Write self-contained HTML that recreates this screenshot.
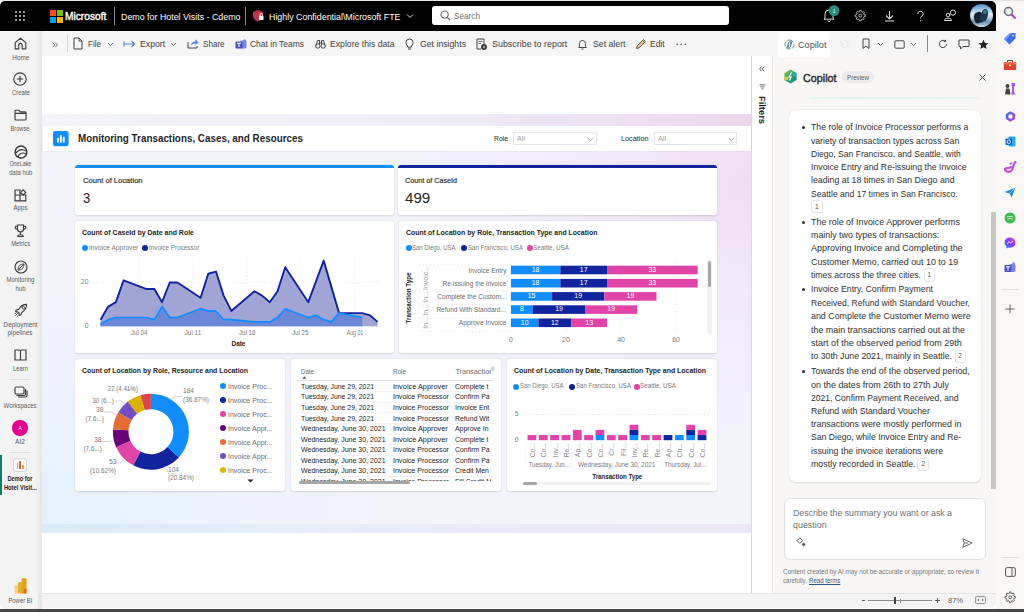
<!DOCTYPE html>
<html><head><meta charset="utf-8">
<style>
*{box-sizing:border-box}
html,body{margin:0;padding:0}
body{width:1024px;height:612px;overflow:hidden;position:relative;background:#fff;font-family:"Liberation Sans",sans-serif;color:#242424}
.a{position:absolute}
.t{position:absolute;white-space:nowrap;line-height:1}
svg{position:absolute;overflow:visible}
</style></head><body>
<div class="a" style="left:0.00px;top:0.00px;width:1024.00px;height:1.00px;background:#e6e6e6;"></div>
<div class="a" style="left:996.00px;top:1.00px;width:28.00px;height:608.00px;background:#f9f8f7;"></div>
<div class="a" style="left:0.00px;top:1.00px;width:996.00px;height:30.00px;background:#000;border-radius:5px 5px 0 0"></div>
<div class="a" style="left:0.00px;top:31.00px;width:42.00px;height:578.00px;background:#f3f3f3;border-radius:0 0 0 5px"></div>
<div class="a" style="left:35.00px;top:31.00px;width:7.00px;height:562.00px;background:linear-gradient(90deg,rgba(243,243,243,1),#ececec 55%,#e4e4e4);"></div>
<div class="a" style="left:42.00px;top:31.00px;width:954.00px;height:25.00px;background:#f5f5f5;"></div>
<div class="a" style="left:42.00px;top:56.00px;width:709.00px;height:537.00px;background:#fff;"></div>
<div class="a" style="left:751.00px;top:56.00px;width:1.00px;height:537.00px;background:#d9d9d9;"></div>
<div class="a" style="left:752.00px;top:56.00px;width:20.00px;height:537.00px;background:#fff;"></div>
<div class="a" style="left:772.00px;top:56.00px;width:224.00px;height:537.00px;background:#f8f7f6;"></div>
<div class="a" style="left:772.00px;top:56.00px;width:1.00px;height:537.00px;background:#ededed;"></div>
<div class="a" style="left:42.00px;top:593.00px;width:954.00px;height:15.00px;background:#f4f4f4;border-top:1px solid #e3e3e3;border-radius:0 0 6px 0"></div>
<div class="a" style="left:38.00px;top:593.00px;width:4.00px;height:16.00px;background:#e6e6e6;"></div>
<div class="a" style="left:0.00px;top:609.00px;width:1024.00px;height:3.00px;background:#474747;"></div>
<svg style="left:0.00px;top:0.00px;" width="40" height="31" viewBox="0 0 40 31"><circle cx="16" cy="12" r="0.9" fill="#e8e8e8"/><circle cx="16" cy="16" r="0.9" fill="#e8e8e8"/><circle cx="16" cy="20" r="0.9" fill="#e8e8e8"/><circle cx="20" cy="12" r="0.9" fill="#e8e8e8"/><circle cx="20" cy="16" r="0.9" fill="#e8e8e8"/><circle cx="20" cy="20" r="0.9" fill="#e8e8e8"/><circle cx="24" cy="12" r="0.9" fill="#e8e8e8"/><circle cx="24" cy="16" r="0.9" fill="#e8e8e8"/><circle cx="24" cy="20" r="0.9" fill="#e8e8e8"/></svg>
<div class="a" style="left:50.00px;top:9.90px;width:6.20px;height:6.20px;background:#f25022;"></div>
<div class="a" style="left:56.80px;top:9.90px;width:6.20px;height:6.20px;background:#7fba00;"></div>
<div class="a" style="left:50.00px;top:16.70px;width:6.20px;height:6.20px;background:#00a4ef;"></div>
<div class="a" style="left:56.80px;top:16.70px;width:6.20px;height:6.20px;background:#ffb900;"></div>
<div class="t" style="left:65.00px;top:11.50px;font-size:10.40px;color:#fff;font-weight:400;-webkit-text-stroke:0.4px #fff;transform:scaleX(0.9821);transform-origin:0 0;">Microsoft</div>
<div class="a" style="left:114.00px;top:6.50px;width:1.00px;height:18.50px;background:#8a8a8a;"></div>
<div class="t" style="left:120.50px;top:11.97px;font-size:9.60px;color:#fff;font-weight:400;transform:scaleX(0.9236);transform-origin:0 0;">Demo for Hotel Visits - Cdemo</div>
<div class="a" style="left:245.00px;top:6.50px;width:1.00px;height:18.50px;background:#8a8a8a;"></div>
<svg style="left:252.00px;top:9.00px;" width="13" height="13" viewBox="0 0 13 13"><path d="M6 1 L11 3 V7 C11 10 8.5 11.5 6 12.5 C3.5 11.5 1 10 1 7 V3 Z" fill="#c4314b"/><rect x="7" y="7" width="4.5" height="4" rx="0.6" fill="#fff"/><path d="M8 7 V5.8 A1.3 1.3 0 0 1 10.6 5.8 V7" stroke="#fff" stroke-width="0.9" fill="none"/></svg>
<div class="t" style="left:268.80px;top:11.97px;font-size:9.60px;color:#fff;font-weight:400;transform:scaleX(0.9237);transform-origin:0 0;">Highly Confidential\Microsoft FTE</div>
<svg style="left:406.00px;top:13.00px;" width="8" height="6" viewBox="0 0 8 6"><path d="M1 1.5 L4 4.5 L7 1.5" stroke="#ddd" stroke-width="1" fill="none"/></svg>
<div class="a" style="left:431.80px;top:6.30px;width:297.00px;height:19.20px;background:#fff;border-radius:3px"></div>
<svg style="left:440.00px;top:10.00px;" width="11" height="11" viewBox="0 0 11 11"><circle cx="4.6" cy="4.6" r="3.6" stroke="#616161" stroke-width="1.1" fill="none"/><path d="M7.3 7.3 L10 10" stroke="#616161" stroke-width="1.1"/></svg>
<div class="t" style="left:453.80px;top:11.17px;font-size:9.60px;color:#6b6b6b;font-weight:400;transform:scaleX(0.8551);transform-origin:0 0;">Search</div>
<svg style="left:822.00px;top:8.00px;" width="14" height="14" viewBox="0 0 14 14"><path d="M3 10 V6 A4 4 0 0 1 11 6 V10 L12 11.2 H2 Z" stroke="#ddd" stroke-width="1" fill="none"/><path d="M5.5 12.5 A1.6 1.6 0 0 0 8.5 12.5" stroke="#ddd" stroke-width="1" fill="none"/></svg>
<svg style="left:828.00px;top:5.00px;" width="12" height="12" viewBox="0 0 12 12"><circle cx="6" cy="5.6" r="5.4" fill="#2a8c80"/><text x="6" y="7.8" font-size="5.5" fill="#e8f5f3" text-anchor="middle" font-family="Liberation Sans">1</text></svg>
<svg style="left:852.50px;top:8.40px;transform:scale(0.82);transform-origin:7.25px 7.6px;" width="15" height="15" viewBox="0 0 15 15"><path d="M6.5 1.2 L8 1.2 L8.4 2.8 L9.6 3.4 L11.1 2.7 L12.1 3.8 L11.4 5.3 L11.9 6.5 L13.5 7 V8.5 L11.9 8.9 L11.4 10.1 L12.1 11.6 L11.1 12.6 L9.6 11.9 L8.4 12.5 L8 14 H6.5 L6.1 12.5 L4.9 11.9 L3.4 12.6 L2.4 11.6 L3.1 10.1 L2.6 8.9 L1 8.5 V7 L2.6 6.5 L3.1 5.3 L2.4 3.8 L3.4 2.7 L4.9 3.4 L6.1 2.8 Z" stroke="#ddd" stroke-width="1" fill="none" stroke-linejoin="round"/><circle cx="7.25" cy="7.6" r="1.8" stroke="#ddd" stroke-width="1" fill="none"/></svg>
<svg style="left:884.00px;top:10.00px;" width="11" height="12" viewBox="0 0 11 12"><path d="M5.5 1 V8.5 M2 5.5 L5.5 9 L9 5.5 M1 11 H10" stroke="#ddd" stroke-width="1.1" fill="none"/></svg>
<svg style="left:916.50px;top:10.50px;" width="7" height="11" viewBox="0 0 7 11"><path d="M0.8 3 A2.7 2.7 0 1 1 4.6 5.4 C3.7 5.9 3.5 6.4 3.5 7.4" stroke="#d8d8d8" stroke-width="1" fill="none"/><circle cx="3.5" cy="9.6" r="0.65" fill="#d8d8d8"/></svg>
<svg style="left:943.00px;top:9.00px;" width="15" height="13" viewBox="0 0 15 13"><circle cx="10" cy="3.6" r="2.6" stroke="#ddd" stroke-width="1" fill="none"/><circle cx="5" cy="6" r="1.8" stroke="#ddd" stroke-width="1" fill="none"/><path d="M1.5 11.5 C1.5 8.5 8.5 8.5 8.5 11.5 Z" stroke="#ddd" stroke-width="1" fill="none"/><path d="M7.5 4.5 L6.5 6" stroke="#ddd" stroke-width="0.8"/></svg>
<div class="a" style="left:969.5px;top:4.3px;width:23px;height:23px;border-radius:50%;overflow:hidden;background:linear-gradient(180deg,#4f86c0 0%,#a9cdea 28%,#e3eef6 45%,#b9d0e4 60%,#6f8fb0 78%,#c7dbec 100%)"><div class="a" style="left:4px;top:8px;width:9px;height:11px;background:#152233;border-radius:50% 40% 20% 30%;transform:rotate(-15deg)"></div><div class="a" style="left:11px;top:5px;width:7px;height:12px;background:#22374e;border-radius:40% 60% 30% 20%;transform:rotate(20deg)"></div><div class="a" style="left:13px;top:6px;width:4px;height:4px;background:#3f9f98;border-radius:50%;opacity:0.7"></div></div>
<svg style="left:14.00px;top:37.00px;" width="13" height="13" viewBox="0 0 13 13"><path d="M1.2 5.6 L6.5 1.2 L11.8 5.6 V11.8 H8.2 V8 A1.7 1.7 0 0 0 4.8 8 V11.8 H1.2 Z" stroke="#3d3d3d" stroke-width="1.15" fill="none" stroke-linejoin="round"/></svg>
<div class="t" style="left:20.40px;top:55.01px;font-size:6.60px;color:#5a5a5a;font-weight:400;transform-origin:center;transform:scaleX(0.9663);transform-origin:50% 0;left:11.60px;">Home</div>
<svg style="left:13.30px;top:72.30px;" width="14" height="14" viewBox="0 0 14 14"><circle cx="7" cy="7" r="6.2" stroke="#3d3d3d" stroke-width="1.15" fill="none"/><path d="M7 3.8 V10.2 M3.8 7 H10.2" stroke="#3d3d3d" stroke-width="1.15"/></svg>
<div class="t" style="left:20.40px;top:90.01px;font-size:6.60px;color:#5a5a5a;font-weight:400;transform-origin:center;transform:scaleX(0.9092);transform-origin:50% 0;left:10.50px;">Create</div>
<svg style="left:14.00px;top:109.00px;" width="13" height="12" viewBox="0 0 13 12"><path d="M1 2.2 A1 1 0 0 1 2 1.2 H5 L6.3 2.8 H11 A1 1 0 0 1 12 3.8 V10 A1 1 0 0 1 11 11 H2 A1 1 0 0 1 1 10 Z M1 4.4 H12" stroke="#3d3d3d" stroke-width="1.15" fill="none"/></svg>
<div class="t" style="left:20.40px;top:125.81px;font-size:6.60px;color:#5a5a5a;font-weight:400;transform-origin:center;transform:scaleX(0.8636);transform-origin:50% 0;left:9.40px;">Browse</div>
<svg style="left:13.50px;top:144.50px;" width="14" height="14" viewBox="0 0 14 14"><circle cx="7" cy="7" r="5.9" stroke="#3d3d3d" stroke-width="1.5" fill="none"/><path d="M2 8 C5 4 9 4 12 6 M4 12 C5 8 9 7 12.5 9" stroke="#3d3d3d" stroke-width="1.2" fill="none"/></svg>
<div class="t" style="left:20.40px;top:160.91px;font-size:6.60px;color:#5a5a5a;font-weight:400;transform-origin:center;transform:scaleX(0.8219);transform-origin:50% 0;left:7.02px;">OneLake</div>
<div class="t" style="left:20.40px;top:170.21px;font-size:6.60px;color:#5a5a5a;font-weight:400;transform-origin:center;transform:scaleX(0.8959);transform-origin:50% 0;left:7.56px;">data hub</div>
<svg style="left:14.00px;top:189.00px;" width="13" height="13" viewBox="0 0 13 13"><path d="M1 6 H6 V11.8 H1 Z M6 6 H11.8 V11.8 H6 Z M1 1 H6 V6 H1 Z" stroke="#3d3d3d" stroke-width="1.15" fill="none"/><path d="M9.2 0.8 L11.8 3.4 L9.2 6 L6.6 3.4 Z" stroke="#3d3d3d" stroke-width="1.15" fill="none"/></svg>
<div class="t" style="left:20.40px;top:205.21px;font-size:6.60px;color:#5a5a5a;font-weight:400;transform-origin:center;transform:scaleX(0.9314);transform-origin:50% 0;left:12.88px;">Apps</div>
<svg style="left:14.00px;top:223.50px;" width="13" height="14" viewBox="0 0 13 14"><path d="M3.5 1 H9.5 V5 A3 3 0 0 1 3.5 5 Z M3.5 2.2 H1.5 A2 2 0 0 0 3.6 5.2 M9.5 2.2 H11.5 A2 2 0 0 1 9.4 5.2 M6.5 8 V10.5 M3.8 12.5 A2.7 1.8 0 0 1 9.2 12.5 Z" stroke="#3d3d3d" stroke-width="1.15" fill="none"/></svg>
<div class="t" style="left:20.40px;top:240.91px;font-size:6.60px;color:#5a5a5a;font-weight:400;transform-origin:center;transform:scaleX(0.8941);transform-origin:50% 0;left:9.77px;">Metrics</div>
<svg style="left:13.50px;top:259.50px;" width="14" height="14" viewBox="0 0 14 14"><circle cx="7" cy="7" r="6" stroke="#3d3d3d" stroke-width="1.15" fill="none"/><path d="M4 10 C4 6 6 4 10 4 C10 8 8 10 4 10 Z M4 10 L10 4" stroke="#3d3d3d" stroke-width="1" fill="none"/></svg>
<div class="t" style="left:20.40px;top:276.71px;font-size:6.60px;color:#5a5a5a;font-weight:400;transform-origin:center;transform:scaleX(0.9092);transform-origin:50% 0;left:5.00px;">Monitoring</div>
<div class="t" style="left:20.40px;top:286.01px;font-size:6.60px;color:#5a5a5a;font-weight:400;transform-origin:center;transform:scaleX(0.9078);transform-origin:50% 0;left:14.89px;">hub</div>
<svg style="left:13.50px;top:302.50px;" width="14" height="14" viewBox="0 0 14 14"><path d="M12.6 1.4 C9 1.4 6.3 3.4 4.6 6.4 L2.2 7 L1.6 8.6 L4 9 L5 10 L5.4 12.4 L7 11.8 L7.6 9.4 C10.6 7.7 12.6 5 12.6 1.4 Z" stroke="#3d3d3d" stroke-width="1.1" fill="none" stroke-linejoin="round"/><circle cx="9.3" cy="4.7" r="1.3" stroke="#3d3d3d" stroke-width="1" fill="none"/><path d="M3.6 10.4 L1.4 12.6 M4.6 12 L3.2 13.4 M2.2 9.6 L0.8 11" stroke="#3d3d3d" stroke-width="0.9"/></svg>
<div class="t" style="left:20.40px;top:321.61px;font-size:6.60px;color:#5a5a5a;font-weight:400;transform-origin:center;transform:scaleX(0.9663);transform-origin:50% 0;left:2.81px;">Deployment</div>
<div class="t" style="left:20.40px;top:330.21px;font-size:6.60px;color:#5a5a5a;font-weight:400;transform-origin:center;transform:scaleX(0.9604);transform-origin:50% 0;left:7.38px;">pipelines</div>
<svg style="left:14.00px;top:349.00px;" width="13" height="12" viewBox="0 0 13 12"><path d="M1 1 H5.5 A1 1 0 0 1 6.5 2 V11 H1 Z M12 1 H7.5 A1 1 0 0 0 6.5 2 V11 H12 Z" stroke="#3d3d3d" stroke-width="1.15" fill="none"/></svg>
<div class="t" style="left:20.40px;top:366.01px;font-size:6.60px;color:#5a5a5a;font-weight:400;transform-origin:center;transform:scaleX(0.8889);transform-origin:50% 0;left:11.96px;">Learn</div>
<div class="a" style="left:9.00px;top:379.00px;width:22.00px;height:1.00px;background:#dcdcdc;"></div>
<svg style="left:13.50px;top:386.00px;" width="14" height="13" viewBox="0 0 14 13"><rect x="1" y="1" width="9" height="7" rx="1.5" stroke="#3d3d3d" stroke-width="1.15" fill="none"/><path d="M2.5 9.5 H10 A1.5 1.5 0 0 0 11.5 8 V3 M4 11 H11.5 A1.5 1.5 0 0 0 13 9.5 V4.5" stroke="#3d3d3d" stroke-width="1.15" fill="none"/></svg>
<div class="t" style="left:20.40px;top:402.91px;font-size:6.60px;color:#5a5a5a;font-weight:400;transform-origin:center;transform:scaleX(0.9127);transform-origin:50% 0;left:2.32px;">Workspaces</div>
<div class="a" style="left:12.4px;top:420px;width:15.5px;height:15.5px;border-radius:50%;background:#e3008c"></div>
<div class="t" style="left:20.20px;top:425.77px;font-size:5.00px;color:#fff;font-weight:400;transform-origin:center;left:18.53px;">A</div>
<div class="t" style="left:20.40px;top:439.21px;font-size:6.60px;color:#5a5a5a;font-weight:400;transform-origin:center;transform:scaleX(1.0095);transform-origin:50% 0;left:15.45px;">AI2</div>
<div class="a" style="left:9.00px;top:452.00px;width:22.00px;height:1.00px;background:#dcdcdc;"></div>
<div class="a" style="left:0.00px;top:455.00px;width:2.00px;height:40.00px;background:#0f7b6c;"></div>
<div class="a" style="left:13px;top:458px;width:14px;height:14px;border-radius:3px;background:#fafafa;border:1px solid #d4d4d4"></div>
<div class="a" style="left:16.80px;top:463.00px;width:1.60px;height:6.00px;background:#e8a33a;"></div>
<div class="a" style="left:19.40px;top:461.00px;width:1.60px;height:8.00px;background:#c36a2d;"></div>
<div class="a" style="left:22.00px;top:465.00px;width:1.60px;height:4.00px;background:#e8a33a;"></div>
<div class="t" style="left:20.40px;top:475.54px;font-size:6.80px;color:#242424;font-weight:700;transform-origin:center;transform:scaleX(0.8377);transform-origin:50% 0;left:5.48px;">Demo for</div>
<div class="t" style="left:20.40px;top:484.54px;font-size:6.80px;color:#242424;font-weight:700;transform-origin:center;transform:scaleX(0.8509);transform-origin:50% 0;left:1.01px;">Hotel Visit...</div>
<svg style="left:14.00px;top:578.00px;" width="13" height="16" viewBox="0 0 13 16"><rect x="0.6" y="7.5" width="5" height="8" rx="0.8" fill="#f2d08a"/><rect x="4" y="4" width="5" height="11.5" rx="0.8" fill="#e6b52a"/><rect x="7.6" y="0.2" width="5" height="15.3" rx="0.8" fill="#e2a31b"/><rect x="9.8" y="11" width="2.6" height="4.5" fill="#e8643a"/></svg>
<div class="t" style="left:20.40px;top:597.61px;font-size:6.60px;color:#5a5a5a;font-weight:400;transform-origin:center;transform:scaleX(0.8967);transform-origin:50% 0;left:7.02px;">Power BI</div>
<svg style="left:51.50px;top:41.50px;" width="6" height="6" viewBox="0 0 6 6"><path d="M0.6 0.6 L2.8 2.9 L0.6 5.2 M3.2 0.6 L5.4 2.9 L3.2 5.2" stroke="#616161" stroke-width="0.9" fill="none"/></svg>
<div class="a" style="left:67.00px;top:35.00px;width:1.00px;height:17.00px;background:#d6d6d6;"></div>
<svg style="left:73.00px;top:37.00px;" width="10" height="13" viewBox="0 0 10 13"><path d="M1 1 H6 L9 4 V12 H1 Z M6 1 V4 H9" stroke="#424242" stroke-width="1" fill="none" stroke-linejoin="round"/></svg>
<div class="t" style="left:88.40px;top:39.58px;font-size:9.00px;color:#424242;font-weight:400;transform:scaleX(0.8887);transform-origin:0 0;">File</div>
<svg style="left:107.00px;top:42.00px;" width="7" height="5" viewBox="0 0 7 5"><path d="M1 1 L3.5 3.5 L6 1" stroke="#616161" stroke-width="0.9" fill="none"/></svg>
<svg style="left:123.00px;top:39.00px;" width="13" height="10" viewBox="0 0 13 10"><path d="M1 2.5 V7.5 M1.5 5 H11.5 M8.5 2 L11.5 5 L8.5 8" stroke="#4f86d6" stroke-width="1.1" fill="none"/></svg>
<div class="t" style="left:139.70px;top:39.58px;font-size:9.00px;color:#424242;font-weight:400;transform:scaleX(0.9648);transform-origin:0 0;">Export</div>
<svg style="left:170.00px;top:42.00px;" width="7" height="5" viewBox="0 0 7 5"><path d="M1 1 L3.5 3.5 L6 1" stroke="#616161" stroke-width="0.9" fill="none"/></svg>
<svg style="left:186.50px;top:38.00px;" width="12" height="11" viewBox="0 0 12 11"><path d="M1 4 V10 H10 V8" stroke="#424242" stroke-width="1" fill="none"/><path d="M3.5 8 C4 5 6 3.5 8.5 3.5 V1.2 L11.5 4.3 L8.5 7.3 V5.4 C6.5 5.4 5 6 3.5 8 Z" fill="#4f86d6"/></svg>
<div class="t" style="left:203.00px;top:39.58px;font-size:9.00px;color:#424242;font-weight:400;transform:scaleX(0.8988);transform-origin:0 0;">Share</div>
<svg style="left:234.50px;top:38.50px;" width="12" height="11" viewBox="0 0 12 11"><rect x="5" y="1.5" width="6.5" height="8" rx="1.8" fill="#7b83eb"/><circle cx="9.5" cy="1.8" r="1.5" fill="#7b83eb"/><rect x="0.5" y="2.5" width="7" height="7" rx="1" fill="#4b53bc"/><path d="M2 4.2 H6 M4 4.2 V8" stroke="#fff" stroke-width="1"/></svg>
<div class="t" style="left:250.00px;top:39.58px;font-size:9.00px;color:#424242;font-weight:400;transform:scaleX(0.9412);transform-origin:0 0;">Chat in Teams</div>
<svg style="left:314.50px;top:39.00px;" width="11" height="10" viewBox="0 0 11 10"><circle cx="2.8" cy="7" r="2.2" stroke="#424242" stroke-width="1" fill="none"/><circle cx="8.2" cy="7" r="2.2" stroke="#424242" stroke-width="1" fill="none"/><path d="M1 6.5 L2.5 1.5 H4.5 V5 M10 6.5 L8.5 1.5 H6.5 V5 M4.5 4 H6.5" stroke="#424242" stroke-width="1" fill="none"/></svg>
<div class="t" style="left:330.00px;top:39.58px;font-size:9.00px;color:#424242;font-weight:400;transform:scaleX(0.9635);transform-origin:0 0;">Explore this data</div>
<svg style="left:404.50px;top:37.50px;" width="9" height="13" viewBox="0 0 9 13"><path d="M4.5 1 A3.6 3.6 0 0 1 8.1 4.6 C8.1 6.5 6.3 7.4 6.2 9.2 H2.8 C2.7 7.4 0.9 6.5 0.9 4.6 A3.6 3.6 0 0 1 4.5 1 Z M3 11 H6" stroke="#424242" stroke-width="1" fill="none"/></svg>
<div class="t" style="left:420.00px;top:39.58px;font-size:9.00px;color:#424242;font-weight:400;transform:scaleX(0.9678);transform-origin:0 0;">Get insights</div>
<svg style="left:476.00px;top:37.50px;" width="12" height="13" viewBox="0 0 12 13"><path d="M1 1 H8 V6 M1 1 V11 H5" stroke="#424242" stroke-width="1" fill="none"/><path d="M2.5 3.5 H6.5 M2.5 5.5 H5" stroke="#424242" stroke-width="0.8"/><circle cx="8" cy="9" r="3" fill="#424242"/><path d="M7 9 H9" stroke="#fff" stroke-width="0.9"/></svg>
<div class="t" style="left:491.70px;top:39.58px;font-size:9.00px;color:#424242;font-weight:400;transform:scaleX(0.9902);transform-origin:0 0;">Subscribe to report</div>
<svg style="left:578.00px;top:38.50px;" width="9" height="11" viewBox="0 0 9 11"><path d="M1.5 7.5 V4.5 A3 3 0 0 1 7.5 4.5 V7.5 L8.3 8.5 H0.7 Z M3.5 10 H5.5" stroke="#424242" stroke-width="0.95" fill="none"/></svg>
<div class="t" style="left:592.50px;top:39.58px;font-size:9.00px;color:#424242;font-weight:400;transform:scaleX(0.9692);transform-origin:0 0;">Set alert</div>
<svg style="left:634.50px;top:37.50px;" width="12" height="12" viewBox="0 0 12 12"><path d="M1.5 10.5 L2.2 7.8 L8.5 1.5 L10.5 3.5 L4.2 9.8 Z" stroke="#5a5a5a" stroke-width="1" fill="#e8c48a" stroke-linejoin="round"/><path d="M7.5 2.5 L9.5 4.5" stroke="#5a5a5a" stroke-width="0.9"/></svg>
<div class="t" style="left:650.40px;top:39.58px;font-size:9.00px;color:#424242;font-weight:400;transform:scaleX(0.9410);transform-origin:0 0;">Edit</div>
<svg style="left:676.00px;top:43.00px;" width="12" height="3" viewBox="0 0 12 3"><circle cx="1.2" cy="1.2" r="0.75" fill="#424242"/><circle cx="5.2" cy="1.2" r="0.75" fill="#424242"/><circle cx="9.2" cy="1.2" r="0.75" fill="#424242"/></svg>
<div class="a" style="left:778.00px;top:32.00px;width:52.00px;height:25.00px;background:#fefefe;border-radius:4px"></div>
<svg style="left:783.50px;top:38.50px;" width="11" height="11" viewBox="0 0 11 11"><path d="M5.5 0.9 A4.6 4.6 0 1 1 5.4 0.9" stroke="#4a7fa0" stroke-width="0.9" fill="none" stroke-dasharray="5 1.5"/><path d="M3.2 8.8 L4.6 3.4 A1.2 1.2 0 0 1 6.9 3.6 L6.5 5.3 M7.8 2.2 L6.4 7.6 A1.2 1.2 0 0 1 4.1 7.4 L4.5 5.7" stroke="#2f6f7a" stroke-width="0.95" fill="none"/></svg>
<div class="t" style="left:797.50px;top:39.67px;font-size:9.60px;color:#555;font-weight:400;transform:scaleX(0.9540);transform-origin:0 0;">Copilot</div>
<svg style="left:839.00px;top:39.00px;" width="10" height="10" viewBox="0 0 10 10"><path d="M2 5 A3.5 3.5 0 1 0 5 1.5 M2 1.5 V5 H5" stroke="#e4e4e4" stroke-width="0.9" fill="none"/></svg>
<svg style="left:862.00px;top:38.00px;" width="8" height="11" viewBox="0 0 8 11"><path d="M1 1 H7 V10.5 L4 8 L1 10.5 Z" stroke="#424242" stroke-width="1" fill="none" stroke-linejoin="round"/></svg>
<svg style="left:877.00px;top:42.00px;" width="7" height="5" viewBox="0 0 7 5"><path d="M1 1 L3.5 3.5 L6 1" stroke="#616161" stroke-width="0.9" fill="none"/></svg>
<svg style="left:893.50px;top:39.50px;" width="11" height="9" viewBox="0 0 11 9"><rect x="0.8" y="0.8" width="9.4" height="7.4" rx="0.8" stroke="#424242" stroke-width="1" fill="none"/></svg>
<svg style="left:910.00px;top:42.00px;" width="7" height="5" viewBox="0 0 7 5"><path d="M1 1 L3.5 3.5 L6 1" stroke="#616161" stroke-width="0.9" fill="none"/></svg>
<div class="a" style="left:927.00px;top:35.00px;width:1.00px;height:17.00px;background:#8a8a8a;"></div>
<svg style="left:938.00px;top:39.00px;" width="10" height="10" viewBox="0 0 10 10"><path d="M8.5 5 A3.6 3.6 0 1 1 7.2 2.2 M7.5 0.8 V2.6 H5.7" stroke="#424242" stroke-width="1" fill="none"/></svg>
<svg style="left:957.50px;top:38.50px;" width="12" height="11" viewBox="0 0 12 11"><path d="M1 1 H11 V7.5 H5 L2.5 10 V7.5 H1 Z" stroke="#424242" stroke-width="1" fill="none" stroke-linejoin="round"/></svg>
<svg style="left:978.00px;top:38.50px;" width="11" height="11" viewBox="0 0 11 11"><path d="M5.5 0.8 L7 4 L10.5 4.3 L7.8 6.6 L8.7 10 L5.5 8.2 L2.3 10 L3.2 6.6 L0.5 4.3 L4 4 Z" fill="#242424"/></svg>
<div class="a" style="left:42.00px;top:114.00px;width:709.00px;height:12.00px;background:linear-gradient(90deg,#f3f3f9 0%,#f0eff9 45%,#efe2f3 80%,#edd5ec 100%);"></div>
<div class="a" style="left:42px;top:126px;width:709px;height:398px;background:#f2f2fb"></div>
<div class="a" style="left:42px;top:126px;width:709px;height:398px;background:radial-gradient(ellipse 330px 230px at 0% 100%,rgba(228,241,253,1) 0%,rgba(232,242,252,0.8) 40%,rgba(242,242,251,0) 100%)"></div>
<div class="a" style="left:42px;top:126px;width:709px;height:398px;background:radial-gradient(ellipse 330px 250px at 100% 15%,rgba(238,218,242,0.9) 0%,rgba(240,228,246,0.55) 45%,rgba(240,230,246,0) 100%)"></div>
<div class="a" style="left:42.00px;top:524.00px;width:709.00px;height:8.50px;background:linear-gradient(90deg,#dbeaf8 0%,#e3edf9 30%,#e9e9f7 60%,#ebe7f6 100%);"></div>
<div class="a" style="left:43px;top:126px;width:708px;height:25px;background:#fff;box-shadow:0 0.5px 1.5px rgba(0,0,0,0.08)"></div>
<svg style="left:52.70px;top:131.00px;" width="15.6" height="15.2" viewBox="0 0 15.6 15.2"><rect x="0" y="0" width="15.6" height="15.2" rx="2.2" fill="#118dff"/><rect x="4" y="7" width="1.9" height="4.6" fill="#fff"/><rect x="6.9" y="4.2" width="1.9" height="7.4" fill="#fff"/><rect x="9.8" y="5.8" width="1.9" height="5.8" fill="#fff"/></svg>
<div class="t" style="left:78.20px;top:133.34px;font-size:10.70px;color:#1f1f1f;font-weight:700;transform:scaleX(0.9217);transform-origin:0 0;">Monitoring Transactions, Cases, and Resources</div>
<div class="t" style="left:494.30px;top:134.87px;font-size:7.60px;color:#252423;font-weight:400;transform:scaleX(0.8960);transform-origin:0 0;">Role</div>
<div class="a" style="left:513.40px;top:131.60px;width:83.20px;height:13.90px;background:#fff;border:1px solid #e6e6e6"></div>
<div class="t" style="left:517.20px;top:135.47px;font-size:7.00px;color:#a0a0a0;font-weight:400;transform:scaleX(1.0281);transform-origin:0 0;">All</div>
<svg style="left:586.50px;top:136.50px;" width="7" height="5" viewBox="0 0 7 5"><path d="M0.8 1 L3.5 3.6 L6.2 1" stroke="#8a8a8a" stroke-width="0.8" fill="none"/></svg>
<div class="t" style="left:621.20px;top:134.87px;font-size:7.60px;color:#252423;font-weight:400;transform:scaleX(0.9576);transform-origin:0 0;">Location</div>
<div class="a" style="left:654.20px;top:131.60px;width:83.00px;height:13.90px;background:#fff;border:1px solid #e6e6e6"></div>
<div class="t" style="left:657.50px;top:135.47px;font-size:7.00px;color:#a0a0a0;font-weight:400;transform:scaleX(1.0281);transform-origin:0 0;">All</div>
<svg style="left:727.80px;top:136.50px;" width="7" height="5" viewBox="0 0 7 5"><path d="M0.8 1 L3.5 3.6 L6.2 1" stroke="#8a8a8a" stroke-width="0.8" fill="none"/></svg>
<div class="a" style="left:75.10px;top:165.10px;width:318.90px;height:50.30px;background:#fff;border-radius:3px;box-shadow:0 0.5px 2px rgba(0,0,0,0.13)"></div>
<div class="a" style="left:75.10px;top:165.10px;width:318.90px;height:2.50px;background:#118dff;border-radius:3px 3px 0 0"></div>
<div class="t" style="left:82.70px;top:177.24px;font-size:7.40px;color:#333;font-weight:400;-webkit-text-stroke:0.2px #333;transform:scaleX(1.0287);transform-origin:0 0;">Count of Location</div>
<div class="t" style="left:83.20px;top:191.07px;font-size:14.80px;color:#252423;font-weight:400;transform:scaleX(0.8744);transform-origin:0 0;">3</div>
<div class="a" style="left:397.50px;top:165.30px;width:319.50px;height:50.10px;background:#fff;border-radius:3px;box-shadow:0 0.5px 2px rgba(0,0,0,0.13)"></div>
<div class="a" style="left:397.50px;top:165.30px;width:319.50px;height:2.50px;background:#12239e;border-radius:3px 3px 0 0"></div>
<div class="t" style="left:405.00px;top:177.24px;font-size:7.40px;color:#333;font-weight:400;-webkit-text-stroke:0.2px #333;transform:scaleX(0.9734);transform-origin:0 0;">Count of CaseId</div>
<div class="t" style="left:405.20px;top:191.07px;font-size:14.80px;color:#252423;font-weight:400;transform:scaleX(1.0242);transform-origin:0 0;">499</div>
<div class="a" style="left:75.00px;top:221.40px;width:318.50px;height:131.60px;background:#fff;border-radius:3px;box-shadow:0 0.5px 2px rgba(0,0,0,0.13)"></div>
<div class="t" style="left:82.20px;top:229.40px;font-size:7.80px;color:#252423;font-weight:700;transform:scaleX(0.8945);transform-origin:0 0;">Count of CaseId by Date and Role</div>
<div class="a" style="left:82.3px;top:245.4px;width:6px;height:6px;border-radius:50%;background:#118dff"></div>
<div class="t" style="left:89.30px;top:245.16px;font-size:6.90px;color:#7a7a7a;font-weight:400;transform:scaleX(0.9605);transform-origin:0 0;">Invoice Approver</div>
<div class="a" style="left:141.8px;top:245.4px;width:6px;height:6px;border-radius:50%;background:#12239e"></div>
<div class="t" style="left:148.70px;top:245.16px;font-size:6.90px;color:#7a7a7a;font-weight:400;transform:scaleX(0.9185);transform-origin:0 0;">Invoice Processor</div>
<svg style="left:0.00px;top:0.00px;" width="1" height="1" viewBox="0 0 1 1"><line x1="139.0" y1="258" x2="139.0" y2="326" stroke="#e2e2e2" stroke-width="0.7" stroke-dasharray="1 2.5"/><line x1="192.8" y1="258" x2="192.8" y2="326" stroke="#e2e2e2" stroke-width="0.7" stroke-dasharray="1 2.5"/><line x1="246.9" y1="258" x2="246.9" y2="326" stroke="#e2e2e2" stroke-width="0.7" stroke-dasharray="1 2.5"/><line x1="300.6" y1="258" x2="300.6" y2="326" stroke="#e2e2e2" stroke-width="0.7" stroke-dasharray="1 2.5"/><line x1="354.5" y1="258" x2="354.5" y2="326" stroke="#e2e2e2" stroke-width="0.7" stroke-dasharray="1 2.5"/><line x1="92.5" y1="282.5" x2="383" y2="282.5" stroke="#dadada" stroke-width="0.8" stroke-dasharray="1 2.5"/><line x1="92.5" y1="326.5" x2="383" y2="326.5" stroke="#e0e0e0" stroke-width="0.7" stroke-dasharray="1 2.5"/><polygon points="100.50,326.25 100.50,319.69 108.20,306.56 115.89,302.19 123.59,280.31 146.68,289.06 154.37,289.06 162.07,302.19 169.76,282.50 177.46,282.50 200.55,297.81 208.24,273.75 215.94,271.56 223.64,295.62 231.33,310.94 254.42,291.25 262.12,295.62 269.81,302.19 277.51,291.25 285.20,267.19 308.29,302.19 323.68,260.62 339.08,313.12 362.16,313.12 369.86,315.31 377.56,321.88 377.56,326.25" fill="#a1a5d6"/><polygon points="100.50,326.25 100.50,324.06 108.20,319.69 115.89,317.50 146.68,317.50 154.37,319.69 162.07,306.56 169.76,317.50 177.46,317.50 200.55,308.75 208.24,310.94 215.94,310.94 223.64,319.69 231.33,319.69 254.42,321.88 269.81,321.88 277.51,317.50 285.20,308.75 308.29,317.50 315.99,315.31 323.68,319.69 331.38,321.88 339.08,313.12 362.16,317.50 362.16,326.25" fill="#6a87d8"/><polyline points="100.50,319.69 108.20,306.56 115.89,302.19 123.59,280.31 146.68,289.06 154.37,289.06 162.07,302.19 169.76,282.50 177.46,282.50 200.55,297.81 208.24,273.75 215.94,271.56 223.64,295.62 231.33,310.94 254.42,291.25 262.12,295.62 269.81,302.19 277.51,291.25 285.20,267.19 308.29,302.19 323.68,260.62 339.08,313.12 362.16,313.12 369.86,315.31 377.56,321.88" fill="none" stroke="#12239e" stroke-width="1.9" stroke-linejoin="round"/><polyline points="100.50,324.06 108.20,319.69 115.89,317.50 146.68,317.50 154.37,319.69 162.07,306.56 169.76,317.50 177.46,317.50 200.55,308.75 208.24,310.94 215.94,310.94 223.64,319.69 231.33,319.69 254.42,321.88 269.81,321.88 277.51,317.50 285.20,308.75 308.29,317.50 315.99,315.31 323.68,319.69 331.38,321.88 339.08,313.12 362.16,317.50" fill="none" stroke="#118dff" stroke-width="1.7" stroke-linejoin="round"/></svg>
<div class="t" style="left:auto;right:935.50px;top:278.96px;font-size:6.90px;color:#7a7a7a;font-weight:400;">20</div>
<div class="t" style="left:auto;right:935.50px;top:322.66px;font-size:6.90px;color:#7a7a7a;font-weight:400;">0</div>
<div class="t" style="left:139.00px;top:329.96px;font-size:6.90px;color:#7a7a7a;font-weight:400;transform-origin:center;transform:scaleX(0.8972);transform-origin:50% 0;left:129.80px;">Jul 04</div>
<div class="t" style="left:192.80px;top:329.96px;font-size:6.90px;color:#7a7a7a;font-weight:400;transform-origin:center;transform:scaleX(0.9223);transform-origin:50% 0;left:183.85px;">Jul 11</div>
<div class="t" style="left:246.90px;top:329.96px;font-size:6.90px;color:#7a7a7a;font-weight:400;transform-origin:center;transform:scaleX(0.8972);transform-origin:50% 0;left:237.70px;">Jul 18</div>
<div class="t" style="left:300.60px;top:329.96px;font-size:6.90px;color:#7a7a7a;font-weight:400;transform-origin:center;transform:scaleX(0.8972);transform-origin:50% 0;left:291.40px;">Jul 25</div>
<div class="t" style="left:354.50px;top:329.96px;font-size:6.90px;color:#7a7a7a;font-weight:400;transform-origin:center;transform:scaleX(0.7554);transform-origin:50% 0;left:343.58px;">Aug 01</div>
<div class="t" style="left:238.70px;top:340.66px;font-size:6.90px;color:#252423;font-weight:700;transform-origin:center;transform:scaleX(0.9372);transform-origin:50% 0;left:231.23px;">Date</div>
<div class="a" style="left:399.00px;top:221.40px;width:318.00px;height:131.60px;background:#fff;border-radius:3px;box-shadow:0 0.5px 2px rgba(0,0,0,0.13)"></div>
<div class="t" style="left:406.00px;top:229.40px;font-size:7.80px;color:#252423;font-weight:700;transform:scaleX(0.8878);transform-origin:0 0;">Count of Location by Role, Transaction Type and Location</div>
<div class="a" style="left:405.50px;top:245.4px;width:6px;height:6px;border-radius:50%;background:#118dff"></div>
<div class="t" style="left:412.30px;top:245.16px;font-size:6.90px;color:#7a7a7a;font-weight:400;transform:scaleX(0.8667);transform-origin:0 0;">San Diego, USA</div>
<div class="a" style="left:461.00px;top:245.4px;width:6px;height:6px;border-radius:50%;background:#12239e"></div>
<div class="t" style="left:467.80px;top:245.16px;font-size:6.90px;color:#7a7a7a;font-weight:400;transform:scaleX(0.8864);transform-origin:0 0;">San Francisco, USA</div>
<div class="a" style="left:526.50px;top:245.4px;width:6px;height:6px;border-radius:50%;background:#e044a7"></div>
<div class="t" style="left:533.30px;top:245.16px;font-size:6.90px;color:#7a7a7a;font-weight:400;transform:scaleX(0.9125);transform-origin:0 0;">Seattle, USA</div>
<svg style="left:0.00px;top:0.00px;" width="1" height="1" viewBox="0 0 1 1"><line x1="565.9" y1="262" x2="565.9" y2="332" stroke="#d4d4d4" stroke-width="0.7" stroke-dasharray="1 2.5"/><line x1="621.1" y1="262" x2="621.1" y2="332" stroke="#d4d4d4" stroke-width="0.7" stroke-dasharray="1 2.5"/><line x1="676.1" y1="262" x2="676.1" y2="332" stroke="#d4d4d4" stroke-width="0.7" stroke-dasharray="1 2.5"/><line x1="510.9" y1="260" x2="510.9" y2="332" stroke="#e4e4e4" stroke-width="0.6" stroke-dasharray="1 2.5"/><line x1="419.5" y1="264.70" x2="511" y2="264.70" stroke="#d6d6d6" stroke-width="0.7" stroke-dasharray="1 2.5"/><line x1="419.5" y1="291.25" x2="511" y2="291.25" stroke="#d6d6d6" stroke-width="0.7" stroke-dasharray="1 2.5"/><line x1="419.5" y1="304.70" x2="511" y2="304.70" stroke="#d6d6d6" stroke-width="0.7" stroke-dasharray="1 2.5"/><line x1="419.5" y1="318.00" x2="511" y2="318.00" stroke="#d6d6d6" stroke-width="0.7" stroke-dasharray="1 2.5"/><line x1="419.5" y1="331.25" x2="511" y2="331.25" stroke="#d6d6d6" stroke-width="0.7" stroke-dasharray="1 2.5"/><rect x="510.90" y="265.70" width="49.45" height="8.6" fill="#118dff"/><rect x="560.35" y="265.70" width="46.70" height="8.6" fill="#12239e"/><rect x="607.04" y="265.70" width="90.65" height="8.6" fill="#e044a7"/><rect x="510.90" y="278.90" width="49.45" height="8.6" fill="#118dff"/><rect x="560.35" y="278.90" width="46.70" height="8.6" fill="#12239e"/><rect x="607.04" y="278.90" width="90.65" height="8.6" fill="#e044a7"/><rect x="510.90" y="292.10" width="41.20" height="8.6" fill="#118dff"/><rect x="552.11" y="292.10" width="52.19" height="8.6" fill="#12239e"/><rect x="604.30" y="292.10" width="52.19" height="8.6" fill="#e044a7"/><rect x="510.90" y="305.30" width="21.98" height="8.6" fill="#118dff"/><rect x="532.88" y="305.30" width="52.19" height="8.6" fill="#12239e"/><rect x="585.07" y="305.30" width="52.19" height="8.6" fill="#e044a7"/><rect x="510.90" y="318.50" width="27.47" height="8.6" fill="#118dff"/><rect x="538.37" y="318.50" width="32.96" height="8.6" fill="#12239e"/><rect x="571.33" y="318.50" width="35.71" height="8.6" fill="#e044a7"/></svg>
<div class="t" style="left:auto;right:517.80px;top:266.51px;font-size:7.20px;color:#6b6b6b;font-weight:400;transform:scaleX(0.9146);transform-origin:100% 0;">Invoice Entry</div>
<div class="t" style="left:535.62px;top:266.76px;font-size:6.90px;color:#fff;font-weight:400;transform-origin:center;left:531.79px;">18</div>
<div class="t" style="left:583.70px;top:266.76px;font-size:6.90px;color:#fff;font-weight:400;transform-origin:center;left:579.86px;">17</div>
<div class="t" style="left:652.37px;top:266.76px;font-size:6.90px;color:#fff;font-weight:400;transform-origin:center;left:648.53px;">33</div>
<div class="t" style="left:auto;right:517.80px;top:279.71px;font-size:7.20px;color:#6b6b6b;font-weight:400;transform:scaleX(0.9072);transform-origin:100% 0;">Re-issuing the invoice</div>
<div class="t" style="left:535.62px;top:279.96px;font-size:6.90px;color:#fff;font-weight:400;transform-origin:center;left:531.79px;">18</div>
<div class="t" style="left:583.70px;top:279.96px;font-size:6.90px;color:#fff;font-weight:400;transform-origin:center;left:579.86px;">17</div>
<div class="t" style="left:652.37px;top:279.96px;font-size:6.90px;color:#fff;font-weight:400;transform-origin:center;left:648.53px;">33</div>
<div class="t" style="left:auto;right:517.80px;top:292.91px;font-size:7.20px;color:#6b6b6b;font-weight:400;transform:scaleX(0.9177);transform-origin:100% 0;">Complete the Custom...</div>
<div class="t" style="left:531.50px;top:293.16px;font-size:6.90px;color:#fff;font-weight:400;transform-origin:center;left:527.67px;">15</div>
<div class="t" style="left:578.20px;top:293.16px;font-size:6.90px;color:#fff;font-weight:400;transform-origin:center;left:574.37px;">19</div>
<div class="t" style="left:630.39px;top:293.16px;font-size:6.90px;color:#fff;font-weight:400;transform-origin:center;left:626.56px;">19</div>
<div class="t" style="left:auto;right:517.80px;top:306.11px;font-size:7.20px;color:#6b6b6b;font-weight:400;transform:scaleX(0.9033);transform-origin:100% 0;">Refund With Standard...</div>
<div class="t" style="left:521.89px;top:306.36px;font-size:6.90px;color:#fff;font-weight:400;transform-origin:center;left:519.97px;">8</div>
<div class="t" style="left:558.97px;top:306.36px;font-size:6.90px;color:#fff;font-weight:400;transform-origin:center;left:555.14px;">19</div>
<div class="t" style="left:611.17px;top:306.36px;font-size:6.90px;color:#fff;font-weight:400;transform-origin:center;left:607.33px;">19</div>
<div class="t" style="left:auto;right:517.80px;top:319.31px;font-size:7.20px;color:#6b6b6b;font-weight:400;transform:scaleX(0.9254);transform-origin:100% 0;">Approve Invoice</div>
<div class="t" style="left:524.63px;top:319.56px;font-size:6.90px;color:#fff;font-weight:400;transform-origin:center;left:520.80px;">10</div>
<div class="t" style="left:554.85px;top:319.56px;font-size:6.90px;color:#fff;font-weight:400;transform-origin:center;left:551.02px;">12</div>
<div class="t" style="left:589.19px;top:319.56px;font-size:6.90px;color:#fff;font-weight:400;transform-origin:center;left:585.35px;">13</div>
<div class="t" style="left:426.00px;top:278.00px;font-size:6.9px;color:#9a9a9a;transform:translate(-50%,-50%) rotate(-90deg)">Invoic...</div>
<div class="t" style="left:426.00px;top:296.50px;font-size:6.9px;color:#9a9a9a;transform:translate(-50%,-50%) rotate(-90deg)">In...</div>
<div class="t" style="left:426.00px;top:310.00px;font-size:6.9px;color:#9a9a9a;transform:translate(-50%,-50%) rotate(-90deg)">In...</div>
<div class="t" style="left:426.00px;top:323.00px;font-size:6.9px;color:#9a9a9a;transform:translate(-50%,-50%) rotate(-90deg)">In...</div>
<div class="t" style="left:408.6px;top:297.7px;font-size:7.2px;font-weight:700;color:#252423;transform:translate(-50%,-50%) rotate(-90deg) scaleX(0.87)">Transaction Type</div>
<div class="t" style="left:510.90px;top:336.76px;font-size:6.90px;color:#7a7a7a;font-weight:400;transform-origin:center;left:508.98px;">0</div>
<div class="t" style="left:565.90px;top:336.76px;font-size:6.90px;color:#7a7a7a;font-weight:400;transform-origin:center;left:562.06px;">20</div>
<div class="t" style="left:621.10px;top:336.76px;font-size:6.90px;color:#7a7a7a;font-weight:400;transform-origin:center;left:617.26px;">40</div>
<div class="t" style="left:676.10px;top:336.76px;font-size:6.90px;color:#7a7a7a;font-weight:400;transform-origin:center;left:672.26px;">60</div>
<div class="a" style="left:707.20px;top:260.00px;width:4.60px;height:73.50px;background:#f3f3f3;border-radius:2px"></div>
<div class="a" style="left:707.60px;top:261.00px;width:3.10px;height:26.30px;background:#a8a8a8;border-radius:2px"></div>
<div class="a" style="left:75.40px;top:359.30px;width:210.00px;height:131.70px;background:#fff;border-radius:3px;box-shadow:0 0.5px 2px rgba(0,0,0,0.13)"></div>
<div class="t" style="left:82.30px;top:367.40px;font-size:7.80px;color:#252423;font-weight:700;transform:scaleX(0.8850);transform-origin:0 0;">Count of Location by Role, Resource and Location</div>
<svg style="left:0.00px;top:0.00px;" width="1" height="1" viewBox="0 0 1 1"><path d="M150.90 393.70 A38.00 38.00 0 0 1 178.81 457.49 L167.42 446.97 A22.50 22.50 0 0 0 150.90 409.20 Z" fill="#118dff"/><path d="M178.81 457.49 A38.00 38.00 0 0 1 133.19 465.32 L140.41 451.61 A22.50 22.50 0 0 0 167.42 446.97 Z" fill="#12239e"/><path d="M133.19 465.32 A38.00 38.00 0 0 1 116.18 447.15 L130.34 440.85 A22.50 22.50 0 0 0 140.41 451.61 Z" fill="#e044a7"/><path d="M116.18 447.15 A38.00 38.00 0 0 1 112.97 429.43 L128.44 430.36 A22.50 22.50 0 0 0 130.34 440.85 Z" fill="#6b007b"/><path d="M112.97 429.43 A38.00 38.00 0 0 1 118.27 412.22 L131.58 420.16 A22.50 22.50 0 0 0 128.44 430.36 Z" fill="#e66c37"/><path d="M118.27 412.22 A38.00 38.00 0 0 1 127.76 401.56 L137.20 413.85 A22.50 22.50 0 0 0 131.58 420.16 Z" fill="#744ec2"/><path d="M127.76 401.56 A38.00 38.00 0 0 1 140.51 395.15 L144.75 410.06 A22.50 22.50 0 0 0 137.20 413.85 Z" fill="#d9b300"/><path d="M140.51 395.15 A38.00 38.00 0 0 1 150.90 393.70 L150.90 409.20 A22.50 22.50 0 0 0 144.75 410.06 Z" fill="#d64550"/><polyline points="171.8,399.0 175.0,396.5 182.0,396.5" fill="none" stroke="#b8b8b8" stroke-width="0.6"/><polyline points="166.0,468.5 169.0,474.0 176.0,474.0" fill="none" stroke="#b8b8b8" stroke-width="0.6"/><polyline points="124.0,460.0 120.0,463.0 116.0,463.0" fill="none" stroke="#b8b8b8" stroke-width="0.6"/><polyline points="113.0,441.0 108.0,441.5 100.0,441.5" fill="none" stroke="#b8b8b8" stroke-width="0.6"/><polyline points="117.0,415.0 111.0,412.0 104.0,412.0" fill="none" stroke="#b8b8b8" stroke-width="0.6"/><polyline points="125.0,404.0 121.0,401.0 115.0,401.0" fill="none" stroke="#b8b8b8" stroke-width="0.6"/><polyline points="137.5,393.5 133.0,389.5 126.0,389.5" fill="none" stroke="#b8b8b8" stroke-width="0.6"/></svg>
<div class="t" style="left:182.50px;top:387.96px;font-size:6.90px;color:#7a7a7a;font-weight:400;transform:scaleX(0.9565);transform-origin:0 0;">184</div>
<div class="t" style="left:183.30px;top:397.16px;font-size:6.90px;color:#7a7a7a;font-weight:400;transform:scaleX(0.9296);transform-origin:0 0;">(36.87%)</div>
<div class="t" style="left:167.50px;top:466.66px;font-size:6.90px;color:#7a7a7a;font-weight:400;transform:scaleX(0.9565);transform-origin:0 0;">104</div>
<div class="t" style="left:167.50px;top:475.46px;font-size:6.90px;color:#7a7a7a;font-weight:400;transform:scaleX(0.9296);transform-origin:0 0;">(20.84%)</div>
<div class="t" style="left:auto;right:907.70px;top:458.86px;font-size:6.90px;color:#7a7a7a;font-weight:400;transform:scaleX(0.9906);transform-origin:100% 0;">53</div>
<div class="t" style="left:auto;right:907.70px;top:467.66px;font-size:6.90px;color:#7a7a7a;font-weight:400;transform:scaleX(0.9296);transform-origin:100% 0;">(10.62%)</div>
<div class="t" style="left:auto;right:922.50px;top:437.36px;font-size:6.90px;color:#7a7a7a;font-weight:400;transform:scaleX(0.9906);transform-origin:100% 0;">38</div>
<div class="t" style="left:auto;right:922.50px;top:446.16px;font-size:6.90px;color:#7a7a7a;font-weight:400;transform:scaleX(0.9286);transform-origin:100% 0;">(7.6...)</div>
<div class="t" style="left:auto;right:920.00px;top:406.96px;font-size:6.90px;color:#7a7a7a;font-weight:400;transform:scaleX(0.9906);transform-origin:100% 0;">38</div>
<div class="t" style="left:auto;right:920.00px;top:415.76px;font-size:6.90px;color:#7a7a7a;font-weight:400;transform:scaleX(0.9286);transform-origin:100% 0;">(7.6...)</div>
<div class="t" style="left:auto;right:910.00px;top:397.66px;font-size:6.90px;color:#7a7a7a;font-weight:400;transform:scaleX(0.9053);transform-origin:100% 0;">30 (6...)</div>
<div class="t" style="left:auto;right:886.00px;top:385.66px;font-size:6.90px;color:#7a7a7a;font-weight:400;transform:scaleX(0.8897);transform-origin:100% 0;">22 (4.41%)</div>
<div class="a" style="left:220.3px;top:383.00px;width:6px;height:6px;border-radius:50%;background:#118dff"></div>
<div class="t" style="left:227.70px;top:382.51px;font-size:7.20px;color:#6b6b6b;font-weight:400;transform:scaleX(0.9770);transform-origin:0 0;">Invoice Proc...</div>
<div class="a" style="left:220.3px;top:397.00px;width:6px;height:6px;border-radius:50%;background:#12239e"></div>
<div class="t" style="left:227.70px;top:396.51px;font-size:7.20px;color:#6b6b6b;font-weight:400;transform:scaleX(0.9770);transform-origin:0 0;">Invoice Proc...</div>
<div class="a" style="left:220.3px;top:411.00px;width:6px;height:6px;border-radius:50%;background:#e044a7"></div>
<div class="t" style="left:227.70px;top:410.51px;font-size:7.20px;color:#6b6b6b;font-weight:400;transform:scaleX(0.9770);transform-origin:0 0;">Invoice Proc...</div>
<div class="a" style="left:220.3px;top:425.00px;width:6px;height:6px;border-radius:50%;background:#6b007b"></div>
<div class="t" style="left:227.70px;top:424.51px;font-size:7.20px;color:#6b6b6b;font-weight:400;transform:scaleX(0.9855);transform-origin:0 0;">Invoice Appr...</div>
<div class="a" style="left:220.3px;top:439.00px;width:6px;height:6px;border-radius:50%;background:#e66c37"></div>
<div class="t" style="left:227.70px;top:438.51px;font-size:7.20px;color:#6b6b6b;font-weight:400;transform:scaleX(0.9855);transform-origin:0 0;">Invoice Appr...</div>
<div class="a" style="left:220.3px;top:453.00px;width:6px;height:6px;border-radius:50%;background:#744ec2"></div>
<div class="t" style="left:227.70px;top:452.51px;font-size:7.20px;color:#6b6b6b;font-weight:400;transform:scaleX(0.9855);transform-origin:0 0;">Invoice Appr...</div>
<div class="a" style="left:220.3px;top:467.00px;width:6px;height:6px;border-radius:50%;background:#d9b300"></div>
<div class="t" style="left:227.70px;top:466.51px;font-size:7.20px;color:#6b6b6b;font-weight:400;transform:scaleX(0.9770);transform-origin:0 0;">Invoice Proc...</div>
<svg style="left:246.50px;top:479.00px;" width="7" height="4" viewBox="0 0 7 4"><path d="M0.5 0.5 H6.5 L3.5 3.5 Z" fill="#252423"/></svg>
<div class="a" style="left:291.00px;top:359.30px;width:210.30px;height:131.70px;background:#fff;border-radius:3px;box-shadow:0 0.5px 2px rgba(0,0,0,0.13)"></div>
<div class="t" style="left:301.40px;top:367.82px;font-size:7.30px;color:#6b6b6b;font-weight:400;transform:scaleX(0.8430);transform-origin:0 0;">Date</div>
<div class="t" style="left:392.90px;top:367.82px;font-size:7.30px;color:#6b6b6b;font-weight:400;transform:scaleX(0.8658);transform-origin:0 0;">Role</div>
<div class="a" style="left:455.4px;top:367.82px;width:35.6px;height:10px;overflow:hidden"><div class="t" style="left:0;top:0;font-size:7.3px;color:#6b6b6b">Transaction</div></div>
<div class="t" style="left:491.00px;top:368.19px;font-size:4.50px;color:#6b6b6b;font-weight:400;">®</div>
<svg style="left:301.50px;top:375.50px;" width="5" height="3" viewBox="0 0 5 3"><path d="M0.3 2.7 L2.3 0.3 L4.3 2.7 Z" fill="#444"/></svg>
<div class="a" style="left:297.00px;top:379.70px;width:197.00px;height:1.00px;background:#dedede;"></div>
<div class="t" style="left:301.40px;top:382.92px;font-size:7.30px;color:#252423;font-weight:400;transform:scaleX(0.9434);transform-origin:0 0;">Tuesday, June 29, 2021</div>
<div class="t" style="left:392.90px;top:382.92px;font-size:7.30px;color:#252423;font-weight:400;transform:scaleX(1.0063);transform-origin:0 0;">Invoice Approver</div>
<div class="a" style="left:455.4px;top:381.92px;width:35.6px;height:10px;overflow:hidden"><div class="t" style="left:0;top:1px;font-size:7.3px;color:#252423;transform:scaleX(0.95);transform-origin:0 0">Complete t</div></div>
<div class="a" style="left:297.00px;top:391.30px;width:197.00px;height:0.80px;background:#f3f3f3;"></div>
<div class="t" style="left:301.40px;top:393.47px;font-size:7.30px;color:#252423;font-weight:400;transform:scaleX(0.9434);transform-origin:0 0;">Tuesday, June 29, 2021</div>
<div class="t" style="left:392.90px;top:393.47px;font-size:7.30px;color:#252423;font-weight:400;transform:scaleX(0.9638);transform-origin:0 0;">Invoice Processor</div>
<div class="a" style="left:455.4px;top:392.47px;width:35.6px;height:10px;overflow:hidden"><div class="t" style="left:0;top:1px;font-size:7.3px;color:#252423;transform:scaleX(0.95);transform-origin:0 0">Confirm Pa</div></div>
<div class="a" style="left:297.00px;top:401.85px;width:197.00px;height:0.80px;background:#f3f3f3;"></div>
<div class="t" style="left:301.40px;top:404.02px;font-size:7.30px;color:#252423;font-weight:400;transform:scaleX(0.9434);transform-origin:0 0;">Tuesday, June 29, 2021</div>
<div class="t" style="left:392.90px;top:404.02px;font-size:7.30px;color:#252423;font-weight:400;transform:scaleX(0.9638);transform-origin:0 0;">Invoice Processor</div>
<div class="a" style="left:455.4px;top:403.02px;width:35.6px;height:10px;overflow:hidden"><div class="t" style="left:0;top:1px;font-size:7.3px;color:#252423;transform:scaleX(0.95);transform-origin:0 0">Invoice Ent</div></div>
<div class="a" style="left:297.00px;top:412.40px;width:197.00px;height:0.80px;background:#f3f3f3;"></div>
<div class="t" style="left:301.40px;top:414.57px;font-size:7.30px;color:#252423;font-weight:400;transform:scaleX(0.9434);transform-origin:0 0;">Tuesday, June 29, 2021</div>
<div class="t" style="left:392.90px;top:414.57px;font-size:7.30px;color:#252423;font-weight:400;transform:scaleX(0.9638);transform-origin:0 0;">Invoice Processor</div>
<div class="a" style="left:455.4px;top:413.57px;width:35.6px;height:10px;overflow:hidden"><div class="t" style="left:0;top:1px;font-size:7.3px;color:#252423;transform:scaleX(0.95);transform-origin:0 0">Refund Wit</div></div>
<div class="a" style="left:297.00px;top:422.95px;width:197.00px;height:0.80px;background:#f3f3f3;"></div>
<div class="t" style="left:301.40px;top:425.12px;font-size:7.30px;color:#252423;font-weight:400;transform:scaleX(0.9595);transform-origin:0 0;">Wednesday, June 30, 2021</div>
<div class="t" style="left:392.90px;top:425.12px;font-size:7.30px;color:#252423;font-weight:400;transform:scaleX(1.0063);transform-origin:0 0;">Invoice Approver</div>
<div class="a" style="left:455.4px;top:424.12px;width:35.6px;height:10px;overflow:hidden"><div class="t" style="left:0;top:1px;font-size:7.3px;color:#252423;transform:scaleX(0.95);transform-origin:0 0">Approve In</div></div>
<div class="a" style="left:297.00px;top:433.50px;width:197.00px;height:0.80px;background:#f3f3f3;"></div>
<div class="t" style="left:301.40px;top:435.67px;font-size:7.30px;color:#252423;font-weight:400;transform:scaleX(0.9595);transform-origin:0 0;">Wednesday, June 30, 2021</div>
<div class="t" style="left:392.90px;top:435.67px;font-size:7.30px;color:#252423;font-weight:400;transform:scaleX(1.0063);transform-origin:0 0;">Invoice Approver</div>
<div class="a" style="left:455.4px;top:434.67px;width:35.6px;height:10px;overflow:hidden"><div class="t" style="left:0;top:1px;font-size:7.3px;color:#252423;transform:scaleX(0.95);transform-origin:0 0">Complete t</div></div>
<div class="a" style="left:297.00px;top:444.05px;width:197.00px;height:0.80px;background:#f3f3f3;"></div>
<div class="t" style="left:301.40px;top:446.22px;font-size:7.30px;color:#252423;font-weight:400;transform:scaleX(0.9595);transform-origin:0 0;">Wednesday, June 30, 2021</div>
<div class="t" style="left:392.90px;top:446.22px;font-size:7.30px;color:#252423;font-weight:400;transform:scaleX(0.9638);transform-origin:0 0;">Invoice Processor</div>
<div class="a" style="left:455.4px;top:445.22px;width:35.6px;height:10px;overflow:hidden"><div class="t" style="left:0;top:1px;font-size:7.3px;color:#252423;transform:scaleX(0.95);transform-origin:0 0">Confirm Pa</div></div>
<div class="a" style="left:297.00px;top:454.60px;width:197.00px;height:0.80px;background:#f3f3f3;"></div>
<div class="t" style="left:301.40px;top:456.77px;font-size:7.30px;color:#252423;font-weight:400;transform:scaleX(0.9595);transform-origin:0 0;">Wednesday, June 30, 2021</div>
<div class="t" style="left:392.90px;top:456.77px;font-size:7.30px;color:#252423;font-weight:400;transform:scaleX(0.9638);transform-origin:0 0;">Invoice Processor</div>
<div class="a" style="left:455.4px;top:455.77px;width:35.6px;height:10px;overflow:hidden"><div class="t" style="left:0;top:1px;font-size:7.3px;color:#252423;transform:scaleX(0.95);transform-origin:0 0">Confirm Pa</div></div>
<div class="a" style="left:297.00px;top:465.15px;width:197.00px;height:0.80px;background:#f3f3f3;"></div>
<div class="t" style="left:301.40px;top:467.32px;font-size:7.30px;color:#252423;font-weight:400;transform:scaleX(0.9595);transform-origin:0 0;">Wednesday, June 30, 2021</div>
<div class="t" style="left:392.90px;top:467.32px;font-size:7.30px;color:#252423;font-weight:400;transform:scaleX(0.9638);transform-origin:0 0;">Invoice Processor</div>
<div class="a" style="left:455.4px;top:466.32px;width:35.6px;height:10px;overflow:hidden"><div class="t" style="left:0;top:1px;font-size:7.3px;color:#252423;transform:scaleX(0.95);transform-origin:0 0">Credit Men</div></div>
<div class="a" style="left:297.00px;top:475.70px;width:197.00px;height:0.80px;background:#f3f3f3;"></div>
<div class="t" style="left:301.40px;top:477.87px;font-size:7.30px;color:#252423;font-weight:400;transform:scaleX(0.9595);transform-origin:0 0;">Wednesday, June 30, 2021</div>
<div class="t" style="left:392.90px;top:477.87px;font-size:7.30px;color:#252423;font-weight:400;transform:scaleX(0.9638);transform-origin:0 0;">Invoice Processor</div>
<div class="a" style="left:455.4px;top:476.87px;width:35.6px;height:10px;overflow:hidden"><div class="t" style="left:0;top:1px;font-size:7.3px;color:#252423;transform:scaleX(0.95);transform-origin:0 0">Fill Credit M</div></div>
<div class="a" style="left:296.00px;top:481.00px;width:200.00px;height:6.00px;background:#fff;"></div>
<div class="a" style="left:299.00px;top:481.00px;width:111.00px;height:3.20px;background:#a6a6a6;border-radius:2px"></div>
<div class="a" style="left:506.90px;top:359.30px;width:210.10px;height:131.70px;background:#fff;border-radius:3px;box-shadow:0 0.5px 2px rgba(0,0,0,0.13)"></div>
<div class="t" style="left:513.50px;top:367.40px;font-size:7.80px;color:#252423;font-weight:700;transform:scaleX(0.8906);transform-origin:0 0;">Count of Location by Date, Transaction Type and Location</div>
<div class="a" style="left:513.40px;top:383.5px;width:6px;height:6px;border-radius:50%;background:#118dff"></div>
<div class="t" style="left:520.20px;top:383.26px;font-size:6.90px;color:#7a7a7a;font-weight:400;transform:scaleX(0.8667);transform-origin:0 0;">San Diego, USA</div>
<div class="a" style="left:568.80px;top:383.5px;width:6px;height:6px;border-radius:50%;background:#12239e"></div>
<div class="t" style="left:575.60px;top:383.26px;font-size:6.90px;color:#7a7a7a;font-weight:400;transform:scaleX(0.8864);transform-origin:0 0;">San Francisco, USA</div>
<div class="a" style="left:633.60px;top:383.5px;width:6px;height:6px;border-radius:50%;background:#e044a7"></div>
<div class="t" style="left:640.40px;top:383.26px;font-size:6.90px;color:#7a7a7a;font-weight:400;transform:scaleX(0.9125);transform-origin:0 0;">Seattle, USA</div>
<div class="t" style="left:auto;right:505.50px;top:411.06px;font-size:6.90px;color:#7a7a7a;font-weight:400;">5</div>
<div class="t" style="left:auto;right:505.50px;top:436.76px;font-size:6.90px;color:#7a7a7a;font-weight:400;">0</div>
<svg style="left:0.00px;top:0.00px;" width="1" height="1" viewBox="0 0 1 1"><line x1="522" y1="414.5" x2="711" y2="414.5" stroke="#cfcfcf" stroke-width="0.8" stroke-dasharray="1 2.5"/><rect x="527.50" y="435.05" width="8.80" height="5.15" fill="#e044a7"/><rect x="538.84" y="435.05" width="8.80" height="5.15" fill="#e044a7"/><rect x="550.18" y="435.05" width="8.80" height="5.15" fill="#e044a7"/><rect x="561.52" y="435.05" width="8.80" height="5.15" fill="#e044a7"/><rect x="572.86" y="429.90" width="8.80" height="10.30" fill="#e044a7"/><rect x="584.20" y="435.05" width="8.80" height="5.15" fill="#e044a7"/><rect x="595.54" y="435.05" width="8.80" height="5.15" fill="#118dff"/><rect x="595.54" y="429.90" width="8.80" height="5.15" fill="#e044a7"/><rect x="606.88" y="435.05" width="8.80" height="5.15" fill="#e044a7"/><rect x="618.22" y="435.05" width="8.80" height="5.15" fill="#e044a7"/><rect x="629.56" y="435.05" width="8.80" height="5.15" fill="#118dff"/><rect x="629.56" y="429.90" width="8.80" height="5.15" fill="#12239e"/><rect x="629.56" y="424.75" width="8.80" height="5.15" fill="#e044a7"/><rect x="640.90" y="435.05" width="8.80" height="5.15" fill="#e044a7"/><rect x="652.24" y="435.05" width="8.80" height="5.15" fill="#e044a7"/><rect x="663.58" y="435.05" width="8.80" height="5.15" fill="#12239e"/><rect x="674.92" y="435.05" width="8.80" height="5.15" fill="#118dff"/><rect x="686.26" y="435.05" width="8.80" height="5.15" fill="#118dff"/><rect x="686.26" y="429.90" width="8.80" height="5.15" fill="#12239e"/><rect x="686.26" y="424.75" width="8.80" height="5.15" fill="#e044a7"/><rect x="697.60" y="435.05" width="8.80" height="5.15" fill="#12239e"/><rect x="697.60" y="429.90" width="8.80" height="5.15" fill="#e044a7"/><line x1="525.8" y1="442" x2="525.8" y2="470" stroke="#d8d8d8" stroke-width="0.6" stroke-dasharray="1 2.5"/><line x1="571.6" y1="442" x2="571.6" y2="470" stroke="#d8d8d8" stroke-width="0.6" stroke-dasharray="1 2.5"/><line x1="661.7" y1="442" x2="661.7" y2="470" stroke="#d8d8d8" stroke-width="0.6" stroke-dasharray="1 2.5"/><line x1="707.6" y1="442" x2="707.6" y2="470" stroke="#d8d8d8" stroke-width="0.6" stroke-dasharray="1 2.5"/></svg>
<div class="t" style="left:532.90px;top:443.00px;font-size:6.9px;color:#8a8a8a;transform:translate(-100%,-50%) rotate(-90deg);transform-origin:100% 50%">Co...</div>
<div class="t" style="left:544.24px;top:443.00px;font-size:6.9px;color:#8a8a8a;transform:translate(-100%,-50%) rotate(-90deg);transform-origin:100% 50%">Co...</div>
<div class="t" style="left:555.58px;top:443.00px;font-size:6.9px;color:#8a8a8a;transform:translate(-100%,-50%) rotate(-90deg);transform-origin:100% 50%">Inv...</div>
<div class="t" style="left:566.92px;top:443.00px;font-size:6.9px;color:#8a8a8a;transform:translate(-100%,-50%) rotate(-90deg);transform-origin:100% 50%">Re...</div>
<div class="t" style="left:578.26px;top:443.00px;font-size:6.9px;color:#8a8a8a;transform:translate(-100%,-50%) rotate(-90deg);transform-origin:100% 50%">Ap...</div>
<div class="t" style="left:589.60px;top:443.00px;font-size:6.9px;color:#8a8a8a;transform:translate(-100%,-50%) rotate(-90deg);transform-origin:100% 50%">Co...</div>
<div class="t" style="left:600.94px;top:443.00px;font-size:6.9px;color:#8a8a8a;transform:translate(-100%,-50%) rotate(-90deg);transform-origin:100% 50%">Co...</div>
<div class="t" style="left:612.28px;top:443.00px;font-size:6.9px;color:#8a8a8a;transform:translate(-100%,-50%) rotate(-90deg);transform-origin:100% 50%">Cr...</div>
<div class="t" style="left:623.62px;top:443.00px;font-size:6.9px;color:#8a8a8a;transform:translate(-100%,-50%) rotate(-90deg);transform-origin:100% 50%">Fil...</div>
<div class="t" style="left:634.96px;top:443.00px;font-size:6.9px;color:#8a8a8a;transform:translate(-100%,-50%) rotate(-90deg);transform-origin:100% 50%">Inv...</div>
<div class="t" style="left:646.30px;top:443.00px;font-size:6.9px;color:#8a8a8a;transform:translate(-100%,-50%) rotate(-90deg);transform-origin:100% 50%">Re...</div>
<div class="t" style="left:657.64px;top:443.00px;font-size:6.9px;color:#8a8a8a;transform:translate(-100%,-50%) rotate(-90deg);transform-origin:100% 50%">Re...</div>
<div class="t" style="left:668.98px;top:443.00px;font-size:6.9px;color:#8a8a8a;transform:translate(-100%,-50%) rotate(-90deg);transform-origin:100% 50%">Ap...</div>
<div class="t" style="left:680.32px;top:443.00px;font-size:6.9px;color:#8a8a8a;transform:translate(-100%,-50%) rotate(-90deg);transform-origin:100% 50%">Ch...</div>
<div class="t" style="left:691.66px;top:443.00px;font-size:6.9px;color:#8a8a8a;transform:translate(-100%,-50%) rotate(-90deg);transform-origin:100% 50%">Co...</div>
<div class="t" style="left:703.00px;top:443.00px;font-size:6.9px;color:#8a8a8a;transform:translate(-100%,-50%) rotate(-90deg);transform-origin:100% 50%">Co...</div>
<div class="t" style="left:549.00px;top:461.76px;font-size:6.90px;color:#7a7a7a;font-weight:400;transform-origin:center;transform:scaleX(0.8955);transform-origin:50% 0;left:525.83px;">Tuesday, Jun...</div>
<div class="t" style="left:617.00px;top:461.76px;font-size:6.90px;color:#7a7a7a;font-weight:400;transform-origin:center;transform:scaleX(0.9308);transform-origin:50% 0;left:575.37px;">Wednesday, June 30, 2021</div>
<div class="t" style="left:685.00px;top:461.76px;font-size:6.90px;color:#7a7a7a;font-weight:400;transform-origin:center;transform:scaleX(0.9014);transform-origin:50% 0;left:661.70px;">Thursday, Jul...</div>
<div class="t" style="left:617.00px;top:473.21px;font-size:7.20px;color:#252423;font-weight:700;transform-origin:center;transform:scaleX(0.8533);transform-origin:50% 0;left:587.70px;">Transaction Type</div>
<div class="a" style="left:523.00px;top:481.50px;width:188.00px;height:3.40px;background:#f0f0f0;border-radius:2px"></div>
<div class="a" style="left:523.00px;top:481.50px;width:14.00px;height:3.40px;background:#a6a6a6;border-radius:2px"></div>
<svg style="left:759.00px;top:65.50px;" width="6" height="6" viewBox="0 0 6 6"><path d="M2.6 0.6 L0.6 2.9 L2.6 5.2 M5.2 0.6 L3.2 2.9 L5.2 5.2" stroke="#424242" stroke-width="0.95" fill="none"/></svg>
<svg style="left:758.50px;top:83.50px;" width="7" height="6" viewBox="0 0 7 6"><path d="M0.5 0.8 H6.5 M1.5 2.8 H5.5 M2.5 4.8 H4.5" stroke="#424242" stroke-width="0.8"/></svg>
<div class="t" style="left:761.7px;top:109.5px;font-size:9.4px;font-weight:700;color:#252423;transform:translate(-50%,-50%) rotate(90deg)">Filters</div>
<svg style="left:783.00px;top:69.40px;" width="15" height="15" viewBox="0 0 15 15"><defs><linearGradient id="cg" x1="0" y1="0" x2="1" y2="1"><stop offset="0" stop-color="#8fd14f"/><stop offset="0.5" stop-color="#2fa66b"/><stop offset="1" stop-color="#1c7c8c"/></linearGradient></defs><path d="M7.5 0.5 L13.6 4 V11 L7.5 14.5 L1.4 11 V4 Z" fill="url(#cg)" stroke-linejoin="round"/><path d="M8.5 3.5 L6 8 H8 L6.5 11.5" stroke="#fff" stroke-width="1.3" fill="none"/><rect x="1.6" y="8" width="3.5" height="3" fill="#e8c840"/><rect x="10" y="4" width="3.4" height="3" fill="#3aa0d8"/></svg>
<div class="t" style="left:803.20px;top:71.70px;font-size:11.70px;color:#2b2b2b;font-weight:400;-webkit-text-stroke:0.45px #2b2b2b;transform:scaleX(0.9206);transform-origin:0 0;">Copilot</div>
<div class="a" style="left:842.30px;top:71.10px;width:31.70px;height:11.80px;background:#ebebeb;border-radius:6px"></div>
<div class="t" style="left:847.00px;top:75.01px;font-size:6.60px;color:#616161;font-weight:400;transform:scaleX(0.9380);transform-origin:0 0;">Preview</div>
<svg style="left:978.50px;top:73.50px;" width="7" height="7" viewBox="0 0 7 7"><path d="M0.5 0.5 L6.5 6.5 M6.5 0.5 L0.5 6.5" stroke="#424242" stroke-width="0.95"/></svg>
<div class="a" style="left:808.60px;top:97.30px;width:171.00px;height:1.80px;background:linear-gradient(90deg,rgba(215,243,234,0.5),#d9f3ec 20%,#dcf2ee 80%,rgba(220,242,238,0.4));border-radius:1px"></div>
<div class="a" style="left:789.2px;top:109.7px;width:191.6px;height:371.9px;background:#fff;border-radius:7px;box-shadow:0 0.5px 2px rgba(0,0,0,0.12)"></div>
<div class="t" style="left:810.90px;top:122.10px;font-size:9.80px;color:#303030;font-weight:400;transform:scaleX(0.8889);transform-origin:0 0;">The role of Invoice Processor performs a</div>
<div class="a" style="left:802px;top:125.80px;width:3.2px;height:3.2px;border-radius:50%;background:#303030"></div>
<div class="t" style="left:810.90px;top:135.60px;font-size:9.80px;color:#303030;font-weight:400;transform:scaleX(0.8808);transform-origin:0 0;">variety of transaction types across San</div>
<div class="t" style="left:810.90px;top:148.80px;font-size:9.80px;color:#303030;font-weight:400;transform:scaleX(0.8732);transform-origin:0 0;">Diego, San Francisco, and Seattle, with</div>
<div class="t" style="left:810.90px;top:162.10px;font-size:9.80px;color:#303030;font-weight:400;transform:scaleX(0.8907);transform-origin:0 0;">Invoice Entry and Re-issuing the Invoice</div>
<div class="t" style="left:810.90px;top:175.40px;font-size:9.80px;color:#303030;font-weight:400;transform:scaleX(0.8968);transform-origin:0 0;">leading at 18 times in San Diego and</div>
<div class="t" style="left:810.90px;top:188.60px;font-size:9.80px;color:#303030;font-weight:400;transform:scaleX(0.8740);transform-origin:0 0;">Seattle and 17 times in San Francisco.</div>
<div class="t" style="left:810.90px;top:216.80px;font-size:9.80px;color:#303030;font-weight:400;transform:scaleX(0.9084);transform-origin:0 0;">The role of Invoice Approver performs</div>
<div class="a" style="left:802px;top:220.50px;width:3.2px;height:3.2px;border-radius:50%;background:#303030"></div>
<div class="t" style="left:810.90px;top:230.10px;font-size:9.80px;color:#303030;font-weight:400;transform:scaleX(0.9062);transform-origin:0 0;">mainly two types of transactions:</div>
<div class="t" style="left:810.90px;top:243.40px;font-size:9.80px;color:#303030;font-weight:400;transform:scaleX(0.9157);transform-origin:0 0;">Approving Invoice and Completing the</div>
<div class="t" style="left:810.90px;top:256.60px;font-size:9.80px;color:#303030;font-weight:400;transform:scaleX(0.9065);transform-origin:0 0;">Customer Memo, carried out 10 to 19</div>
<div class="t" style="left:810.90px;top:269.90px;font-size:9.80px;color:#303030;font-weight:400;transform:scaleX(0.8861);transform-origin:0 0;">times across the three cities.</div>
<div class="t" style="left:810.90px;top:284.30px;font-size:9.80px;color:#303030;font-weight:400;transform:scaleX(0.8896);transform-origin:0 0;">Invoice Entry, Confirm Payment</div>
<div class="a" style="left:802px;top:288.00px;width:3.2px;height:3.2px;border-radius:50%;background:#303030"></div>
<div class="t" style="left:810.90px;top:297.50px;font-size:9.80px;color:#303030;font-weight:400;transform:scaleX(0.8762);transform-origin:0 0;">Received, Refund with Standard Voucher,</div>
<div class="t" style="left:810.90px;top:311.30px;font-size:9.80px;color:#303030;font-weight:400;transform:scaleX(0.9046);transform-origin:0 0;">and Complete the Customer Memo were</div>
<div class="t" style="left:810.90px;top:324.50px;font-size:9.80px;color:#303030;font-weight:400;transform:scaleX(0.9086);transform-origin:0 0;">the main transactions carried out at the</div>
<div class="t" style="left:810.90px;top:337.60px;font-size:9.80px;color:#303030;font-weight:400;transform:scaleX(0.9236);transform-origin:0 0;">start of the observed period from 29th</div>
<div class="t" style="left:810.90px;top:351.20px;font-size:9.80px;color:#303030;font-weight:400;transform:scaleX(0.8896);transform-origin:0 0;">to 30th June 2021, mainly in Seattle.</div>
<div class="t" style="left:810.90px;top:366.10px;font-size:9.80px;color:#303030;font-weight:400;transform:scaleX(0.9083);transform-origin:0 0;">Towards the end of the observed period,</div>
<div class="a" style="left:802px;top:369.80px;width:3.2px;height:3.2px;border-radius:50%;background:#303030"></div>
<div class="t" style="left:810.90px;top:379.50px;font-size:9.80px;color:#303030;font-weight:400;transform:scaleX(0.9141);transform-origin:0 0;">on the dates from 26th to 27th July</div>
<div class="t" style="left:810.90px;top:392.50px;font-size:9.80px;color:#303030;font-weight:400;transform:scaleX(0.8765);transform-origin:0 0;">2021, Confirm Payment Received, and</div>
<div class="t" style="left:810.90px;top:405.60px;font-size:9.80px;color:#303030;font-weight:400;transform:scaleX(0.8940);transform-origin:0 0;">Refund with Standard Voucher</div>
<div class="t" style="left:810.90px;top:419.10px;font-size:9.80px;color:#303030;font-weight:400;transform:scaleX(0.9086);transform-origin:0 0;">transactions were mostly performed in</div>
<div class="t" style="left:810.90px;top:432.20px;font-size:9.80px;color:#303030;font-weight:400;transform:scaleX(0.8806);transform-origin:0 0;">San Diego, while Invoice Entry and Re-</div>
<div class="t" style="left:810.90px;top:445.80px;font-size:9.80px;color:#303030;font-weight:400;transform:scaleX(0.9017);transform-origin:0 0;">issuing the invoice iterations were</div>
<div class="t" style="left:810.90px;top:459.10px;font-size:9.80px;color:#303030;font-weight:400;transform:scaleX(0.9027);transform-origin:0 0;">mostly recorded in Seattle.</div>
<div class="a" style="left:811.00px;top:200.10px;width:11.60px;height:13.4px;border:1px solid #e3e3e3;border-radius:3px;background:#fff"></div>
<div class="t" style="left:816.80px;top:203.61px;font-size:6.60px;color:#505050;font-weight:400;transform-origin:center;left:814.96px;">1</div>
<div class="a" style="left:923.60px;top:268.40px;width:11.40px;height:13.4px;border:1px solid #e3e3e3;border-radius:3px;background:#fff"></div>
<div class="t" style="left:929.30px;top:271.91px;font-size:6.60px;color:#505050;font-weight:400;transform-origin:center;left:927.46px;">1</div>
<div class="a" style="left:954.50px;top:349.60px;width:11.30px;height:13.4px;border:1px solid #e3e3e3;border-radius:3px;background:#fff"></div>
<div class="t" style="left:960.15px;top:353.11px;font-size:6.60px;color:#505050;font-weight:400;transform-origin:center;left:958.31px;">2</div>
<div class="a" style="left:917.40px;top:457.50px;width:11.80px;height:13.4px;border:1px solid #e3e3e3;border-radius:3px;background:#fff"></div>
<div class="t" style="left:923.30px;top:461.01px;font-size:6.60px;color:#505050;font-weight:400;transform-origin:center;left:921.46px;">2</div>
<div class="a" style="left:991.00px;top:212.00px;width:5.00px;height:277.00px;background:#c6c6c6;"></div>
<div class="a" style="left:783.5px;top:497.5px;width:202.1px;height:62.7px;background:#fff;border:1px solid #e1e1e1;border-radius:6px"></div>
<div class="t" style="left:792.50px;top:508.27px;font-size:9.60px;color:#707070;font-weight:400;transform:scaleX(0.9147);transform-origin:0 0;">Describe the summary you want or ask a</div>
<div class="t" style="left:792.50px;top:520.27px;font-size:9.60px;color:#707070;font-weight:400;transform:scaleX(0.9289);transform-origin:0 0;">question</div>
<svg style="left:796.00px;top:537.00px;" width="11" height="11" viewBox="0 0 11 11"><path d="M3.8 0.8 L6.6 3.6 L3.8 6.4 L1 3.6 Z" stroke="#5a5a5a" stroke-width="1" fill="none" stroke-linejoin="round"/><path d="M7.6 5.6 L9.6 7.6 L7.6 9.6 L5.6 7.6 Z" fill="#5a5a5a"/></svg>
<svg style="left:961.50px;top:537.50px;" width="11" height="10" viewBox="0 0 11 10"><path d="M0.8 0.8 L10.2 5 L0.8 9.2 L2.3 5 Z M2.3 5 H6" stroke="#5a5a5a" stroke-width="0.9" fill="none" stroke-linejoin="round"/></svg>
<div class="t" style="left:782.80px;top:569.44px;font-size:6.80px;color:#777;font-weight:400;transform:scaleX(0.9297);transform-origin:0 0;">Content created by AI may not be accurate or appropriate, so review it</div>
<div class="t" style="left:782.80px;top:578.44px;font-size:6.80px;color:#777;font-weight:400;transform:scaleX(0.8913);transform-origin:0 0;">carefully.</div>
<div class="t" style="left:808.90px;top:578.44px;font-size:6.80px;color:#2b5b86;font-weight:400;text-decoration:underline;transform:scaleX(0.8936);transform-origin:0 0;">Read terms</div>
<div class="a" style="left:861.50px;top:600.30px;width:3.00px;height:0.90px;background:#5a5a5a;"></div>
<div class="a" style="left:868.00px;top:600.40px;width:64.00px;height:0.80px;background:#8a8a8a;"></div>
<div class="a" style="left:894.00px;top:597.00px;width:2.00px;height:7.00px;background:#424242;"></div>
<div class="a" style="left:899.50px;top:598.50px;width:0.80px;height:4.00px;background:#8a8a8a;"></div>
<div class="a" style="left:934.50px;top:600.30px;width:5.00px;height:0.90px;background:#5a5a5a;"></div>
<div class="a" style="left:936.60px;top:598.20px;width:0.90px;height:5.00px;background:#5a5a5a;"></div>
<div class="t" style="left:948.00px;top:597.07px;font-size:7.60px;color:#616161;font-weight:400;transform:scaleX(0.9866);transform-origin:0 0;">87%</div>
<svg style="left:975.00px;top:596.00px;" width="11" height="8" viewBox="0 0 11 8"><rect x="0.5" y="0.5" width="10" height="7" rx="1" stroke="#8a8a8a" stroke-width="0.9" fill="#f0f0f0"/><path d="M2 4 L4 2.5 V5.5 Z M9 4 L7 2.5 V5.5 Z" fill="#8a8a8a"/></svg>
<svg style="left:1003.00px;top:6.00px;" width="14" height="14" viewBox="0 0 14 14"><circle cx="5.5" cy="5.5" r="4" stroke="#6b6b6b" stroke-width="1.5" fill="#eef3f8"/><path d="M8.5 8.5 L12 12" stroke="#b73bd6" stroke-width="2" stroke-linecap="round"/></svg>
<svg style="left:1003.00px;top:32.00px;" width="14" height="13" viewBox="0 0 14 13"><path d="M1 7 L7 1 H12.5 V6.5 L6.5 12.5 Z" fill="#3b6ee6"/><path d="M1 7 L7 1 H9 L3 8 Z" fill="#6f9cf5"/><circle cx="10" cy="3.5" r="1" fill="#f3c34a"/></svg>
<svg style="left:1003.00px;top:59.00px;" width="14" height="12" viewBox="0 0 14 12"><path d="M4.5 3 V1.5 H9.5 V3" stroke="#7a3a2a" stroke-width="1" fill="none"/><rect x="0.8" y="3" width="12.4" height="8" rx="1" fill="#d9442d"/><rect x="0.8" y="3" width="12.4" height="2.5" fill="#f06a4a"/><rect x="6" y="5.5" width="2" height="1.6" fill="#ffd6a0"/></svg>
<svg style="left:1003.00px;top:82.00px;" width="14" height="14" viewBox="0 0 14 14"><circle cx="4.5" cy="4" r="2" fill="#444"/><path d="M2 12.5 H7.5 L6.5 6.5 H3 Z" fill="#444"/><path d="M8.5 1 H12 V3 L11 5 V10 L12.5 12.5 H8 L9 10 V5 L8.5 3 Z" fill="#a855f7"/></svg>
<svg style="left:1004.50px;top:110.50px;" width="11" height="11" viewBox="0 0 11 11"><defs><linearGradient id="mg" x1="0" y1="0" x2="1" y2="1"><stop offset="0" stop-color="#2f7de1"/><stop offset="0.6" stop-color="#8a4de0"/><stop offset="1" stop-color="#d94bb0"/></linearGradient></defs><path d="M5.5 0.3 L10.2 3 V8 L5.5 10.7 L0.8 8 V3 Z" fill="url(#mg)"/><circle cx="5.5" cy="5.5" r="2.2" fill="#f9f8f7"/></svg>
<svg style="left:1004.50px;top:136.00px;" width="11" height="11" viewBox="0 0 11 11"><rect x="3.5" y="0.5" width="7" height="10" rx="1" fill="#28a8ea"/><rect x="0.5" y="2.5" width="6.5" height="6.5" rx="0.8" fill="#0a64c8"/><ellipse cx="3.75" cy="5.75" rx="1.6" ry="1.9" stroke="#fff" stroke-width="0.9" fill="none"/></svg>
<svg style="left:1004.00px;top:160.50px;" width="12" height="12" viewBox="0 0 12 12"><path d="M1 8 C1 11 6 12 8 9 L10.5 2 L11.5 1 M1 8 C3 6 5 8 7 6" stroke="#c04de0" stroke-width="2.2" fill="none" stroke-linecap="round"/><path d="M6 3 L8 2" stroke="#7a5af0" stroke-width="1.5"/></svg>
<svg style="left:1004.00px;top:186.50px;" width="12" height="11" viewBox="0 0 12 11"><path d="M0.5 5 L11.5 0.5 L7.5 10.5 L5.5 6.5 Z" fill="#2b88d8"/><path d="M5.5 6.5 L11.5 0.5" stroke="#9fd0f5" stroke-width="0.8"/></svg>
<svg style="left:1004.00px;top:212.00px;" width="12" height="12" viewBox="0 0 12 12"><circle cx="6" cy="6" r="5.5" fill="#3fb950"/><path d="M3 5 C5 4 7.5 4.3 9 5.3 M3.5 7 C5.5 6.2 7 6.5 8.5 7.3" stroke="#eafbe8" stroke-width="0.9" fill="none"/></svg>
<svg style="left:1004.00px;top:237.00px;" width="12" height="12" viewBox="0 0 12 12"><defs><linearGradient id="msg" x1="0" y1="1" x2="1" y2="0"><stop offset="0" stop-color="#0a7cff"/><stop offset="0.6" stop-color="#a033ff"/><stop offset="1" stop-color="#ff5c87"/></linearGradient></defs><path d="M6 0.5 C9 0.5 11.5 2.7 11.5 5.6 C11.5 8.5 9 10.7 6 10.7 C5.4 10.7 4.9 10.6 4.4 10.5 L2.5 11.5 V9.5 C1.3 8.5 0.5 7.1 0.5 5.6 C0.5 2.7 3 0.5 6 0.5 Z" fill="url(#msg)"/><path d="M3 7 L5 4.5 L6.5 6 L9 4" stroke="#fff" stroke-width="0.9" fill="none"/></svg>
<svg style="left:1004.00px;top:262.00px;" width="12" height="12" viewBox="0 0 12 12"><rect x="5" y="2" width="6.5" height="8" rx="1.8" fill="#7b83eb"/><circle cx="9.5" cy="1.8" r="1.5" fill="#7b83eb"/><rect x="0.5" y="3" width="7" height="7" rx="1" fill="#4b53bc"/><path d="M2 4.8 H6 M4 4.8 V8.6" stroke="#fff" stroke-width="1"/></svg>
<div class="a" style="left:1001.00px;top:289.00px;width:18.00px;height:1.00px;background:#dedede;"></div>
<svg style="left:1005.00px;top:303.50px;" width="10" height="10" viewBox="0 0 10 10"><path d="M5 0.5 V9.5 M0.5 5 H9.5" stroke="#555" stroke-width="0.9"/></svg>
<div class="a" style="left:1001.00px;top:557.00px;width:18.00px;height:1.00px;background:#dedede;"></div>
<svg style="left:1004.50px;top:567.00px;" width="11" height="10" viewBox="0 0 11 10"><rect x="0.6" y="0.6" width="9.8" height="8.8" rx="1.6" stroke="#555" stroke-width="1" fill="none"/><path d="M7 0.6 V9.4" stroke="#555" stroke-width="1"/></svg>
<svg style="left:1004.00px;top:591.00px;" width="13" height="13" viewBox="0 0 13 13"><path d="M5.6 0.8 L6.8 0.8 L7.1 2.2 L8.1 2.7 L9.4 2.1 L10.2 3 L9.6 4.3 L10 5.3 L11.4 5.7 V6.9 L10 7.3 L9.6 8.3 L10.2 9.6 L9.4 10.4 L8.1 9.8 L7.1 10.3 L6.8 11.7 H5.6 L5.3 10.3 L4.3 9.8 L3 10.4 L2.2 9.6 L2.8 8.3 L2.4 7.3 L1 6.9 V5.7 L2.4 5.3 L2.8 4.3 L2.2 3 L3 2.1 L4.3 2.7 L5.3 2.2 Z" stroke="#555" stroke-width="1" fill="none" stroke-linejoin="round"/><circle cx="6.2" cy="6.3" r="1.5" stroke="#555" stroke-width="0.9" fill="none"/></svg></body></html>
